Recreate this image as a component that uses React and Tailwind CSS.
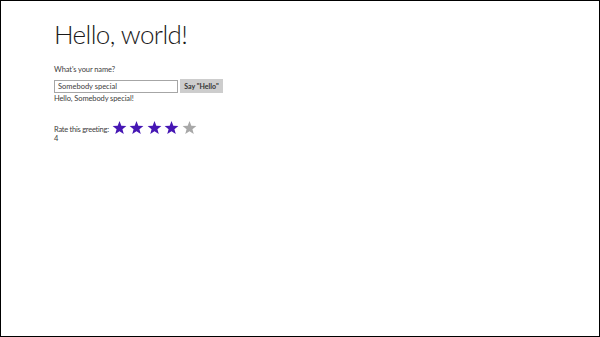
import React, { useState } from 'react';

const Star = ({ filled }) => (
  <svg viewBox="0 0 24 24" className="w-[15px] h-[15px]">
    <path
      d="M12 1.5l2.9 7.6 8.1.4-6.3 5.1 2.1 7.9L12 18l-6.8 4.5 2.1-7.9L1 9.5l8.1-.4z"
      fill={filled ? '#4617b4' : '#a8a8a8'}
    />
  </svg>
);

export default function App() {
  const [name, setName] = useState('Somebody special');
  const [rating] = useState(4);

  return (
    <div className="w-[600px] h-[337px] border border-black bg-white text-[#404040] font-['Lato',sans-serif] pl-[53px] pt-[20px]">
      {/* Title */}
      <h1 className="text-[26px] leading-[26px] font-light tracking-[-0.6px] text-[#1a1a1a]">Hello, world!</h1>

      <p className="mt-[18px] text-[7.5px] leading-[9px] tracking-[-0.1px]">What's your name?</p>

      <div className="mt-[5px] flex gap-[2px] items-center">
        <input
          value={name}
          onChange={(e) => setName(e.target.value)}
          className="w-[124px] h-[13px] border border-[#a6a6a6] px-[3px] text-[7.5px] text-[#404040] outline-none font-['Lato',sans-serif]"
        />
        <button className="h-[14px] w-[43px] bg-[#cdcdcd] text-[7px] font-bold text-[#333] font-['Lato',sans-serif]">Say "Hello"</button>
      </div>

      <p className="mt-[1px] text-[7.5px] leading-[9px] tracking-[-0.1px]">Hello, {name}!</p>

      {/* Rating */}
      <div className="mt-[17px] flex items-center gap-[3px]">
        <span className="text-[7.5px] leading-[9px] mt-[4px] tracking-[-0.25px]">Rate this greeting:</span>
        <div className="flex gap-[2.5px]">
          {[1, 2, 3, 4, 5].map((i) => (
            <Star key={i} filled={i <= rating} />
          ))}
        </div>
      </div>
      <p className="text-[7.5px] leading-[9px] -mt-[1px]">{rating}</p>
    </div>
  );
}
